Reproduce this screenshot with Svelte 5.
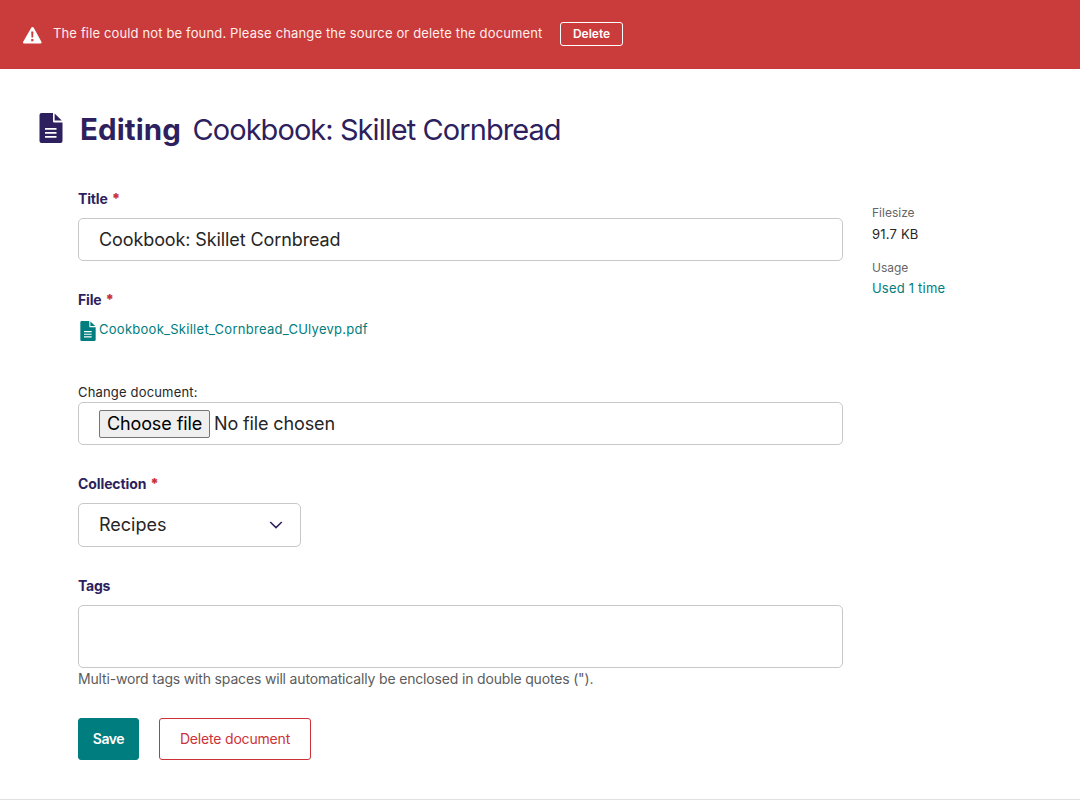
<script>
  let title = $state('Cookbook: Skillet Cornbread');
  let tags = $state('');
</script>

{#snippet docIcon(w, h)}
  <svg width={w} height={h} viewBox="0 0 24 30" fill="currentColor" aria-hidden="true">
    <path fill-rule="evenodd" d="M2 0H14V8.2Q14 9.5 15.3 9.5H23.5V28Q23.5 30 21.5 30H2.5Q.5 30 .5 28V2Q.5 0 2.5 0ZM6 15V16.8H17.5V15ZM6 19V20.8H17.5V19ZM6 23V24.8H17.5V23Z" />
    <path d="M15.6 0.6 22.8 7.4H15.6Z" />
  </svg>
{/snippet}

<div class="page">
  <div class="banner">
    <svg class="warn" width="19" height="17" viewBox="0 0 19 17" aria-hidden="true">
      <path fill="#fff" fill-rule="evenodd" d="M9.5 0Q10.4 0 10.9 .9L18.4 14.7Q19 16.4 17.5 16.6H1.1Q-.5 16.4 .2 14.7L8.1 .9Q8.6 0 9.5 0ZM8.2 4.5L8.5 10.5H10.1L10.4 4.5ZM8.2 12V14.2H10.4V12Z" />
    </svg>
    <span class="message">The file could not be found. Please change the source or delete the document</span>
    <button class="banner-delete">Delete</button>
  </div>

  <header>
    <span class="head-icon">{@render docIcon(24, 30)}</span>
    <h1><strong>Editing</strong><span>Cookbook: Skillet Cornbread</span></h1>
  </header>

  <div class="columns">
    <form onsubmit={(e) => e.preventDefault()}>
      <label class="title-label" for="title"><span>Title</span> <b>*</b></label>
      <input id="title" class="box field" bind:value={title} />

      <div class="label file-label"><span>File</span> <b>*</b></div>
      <a class="file" href="#file">{@render docIcon(16, 20)}<span>Cookbook_Skillet_Cornbread_CUlyevp.pdf</span></a>

      <div class="change">Change document:</div>
      <div class="box chooser">
        <button type="button" class="choose">Choose file</button><span class="none">No file chosen</span>
      </div>

      <div class="label collection-label"><span>Collection</span> <b>*</b></div>
      <div class="box select">
        <span>Recipes</span>
        <svg width="14" height="8" viewBox="0 0 14 8" aria-hidden="true"><path d="M1.2 1 7 6.6 12.8 1" fill="none" stroke="#2e1f5e" stroke-width="1.5" /></svg>
      </div>

      <label class="tags-label" for="tags"><span>Tags</span></label>
      <textarea id="tags" class="box" bind:value={tags}></textarea>
      <p class="help">Multi-word tags with spaces will automatically be enclosed in double quotes (").</p>

      <div class="actions">
        <button class="save">Save</button>
        <button class="delete" type="button">Delete document</button>
      </div>
    </form>

    <aside>
      <div class="term">Filesize</div>
      <div class="size">91.7 KB</div>
      <div class="term usage">Usage</div>
      <a class="used" href="#usage">Used 1 time</a>
    </aside>
  </div>
</div>

<style>
  :global(body) { margin: 0; background: #fff; }
  .page, .page * { box-sizing: border-box; }
  .page {
    height: 800px;
    overflow: hidden;
    border-bottom: 1px solid #e0e0e0;
    font-family: Inter, "Liberation Sans", sans-serif;
    font-size: 13px;
    color: #262626;
  }
  button, input, textarea { font-family: inherit; margin: 0; }
  svg { display: block; flex: none; }
  a { color: #007d7e; text-decoration: none; }
  span, label, .label, button, a { white-space: nowrap; }

  .banner { height: 69px; background: #ca3b3b; color: #fff; display: flex; align-items: flex-start; padding-left: 23px; }
  .warn { margin-top: 27px; }
  .message { margin-left: 11px; margin-top: 23px; line-height: 20px; width: 490px; letter-spacing: 0.145px; color: #ffeeee; }
  .banner-delete { margin: 22px 0 0 17px; width: 63px; height: 24px; padding: 0 0 1px; border: 1px solid #fff; border-radius: 3px; background: none; color: #fff; font-size: 12px; font-weight: 600; }

  header { display: flex; padding: 44px 0 0 39px; height: 121px; color: #2e1f5e; }
  h1 { display: flex; margin: -4px 0 0 17px; font-size: 29px; line-height: 40px; font-weight: 400; letter-spacing: -0.94px; }
  h1 strong { width: 112.5px; font-size: 29.5px; font-weight: 700; letter-spacing: 0.1px; }
  h1 span { line-height: 42px; }

  .columns { display: flex; padding-left: 78px; }
  form { width: 765px; display: flex; flex-direction: column; align-items: flex-start; }
  label, .label { display: flex; gap: 4px; height: 20px; line-height: 20px; font-size: 14px; font-weight: 700; letter-spacing: -0.15px; color: #2e1f5e; }
  label b, .label b { color: #cd3238; }
  .title-label { margin-top: -1px; }
  .box { border: 1px solid #c8c8c8; border-radius: 5px; background: #fff; color: #262626; outline: none; }
  .field { margin-top: 9px; width: 765px; height: 43px; padding: 0 20px; font-size: 18px; letter-spacing: -0.1px; }
  .file-label { margin-top: 29px; }
  .file { display: flex; margin: 11px 0 0 2px; height: 20px; }
  .file span { margin-left: 3px; line-height: 17px; letter-spacing: 0.27px; }
  .change { margin-top: 42px; height: 19px; line-height: 19px; letter-spacing: 0.17px; }
  .chooser { width: 765px; height: 43px; display: flex; align-items: center; padding-left: 20px; font-size: 18px; }
  .choose { width: 111px; height: 28px; padding: 0; border: 1px solid #767676; border-radius: 2px; background: #efefef; color: #000; font-size: 18px; letter-spacing: -0.1px; }
  .none { margin-left: 4px; letter-spacing: -0.13px; }
  .collection-label { margin-top: 29px; letter-spacing: -0.1px; }
  .select { margin-top: 9px; width: 223px; height: 44px; padding: 0 17px 0 20px; display: flex; align-items: center; justify-content: space-between; font-size: 18px; }
  .select span { line-height: 22px; }
  .tags-label { margin-top: 29px; letter-spacing: -0.25px; }
  textarea { display: block; margin-top: 9px; width: 765px; height: 63px; resize: none; }
  .help { margin: 1px 0 0; height: 20px; line-height: 20px; font-size: 14px; color: #5c5c5c; letter-spacing: -0.168px; }
  .actions { display: flex; gap: 20px; margin-top: 29px; }
  .actions button { height: 42px; padding: 0 0 2px; border-radius: 3px; font-size: 14px; }
  .save { width: 61px; border: 1px solid #007d7e; background: #007d7e; color: #fff; font-weight: 600; letter-spacing: -0.45px; }
  .delete { width: 152px; border: 1px solid #cd3238; background: #fff; color: #cd3238; letter-spacing: -0.18px; }

  aside { margin: 14px 0 0 29px; display: flex; flex-direction: column; }
  .term { font-size: 12px; line-height: 18px; color: #666; }
  .size { margin-top: 2px; line-height: 20px; letter-spacing: 0.2px; }
  .usage { margin-top: 15px; }
  .used { margin-top: 1px; line-height: 20px; letter-spacing: 0.2px; }
</style>
